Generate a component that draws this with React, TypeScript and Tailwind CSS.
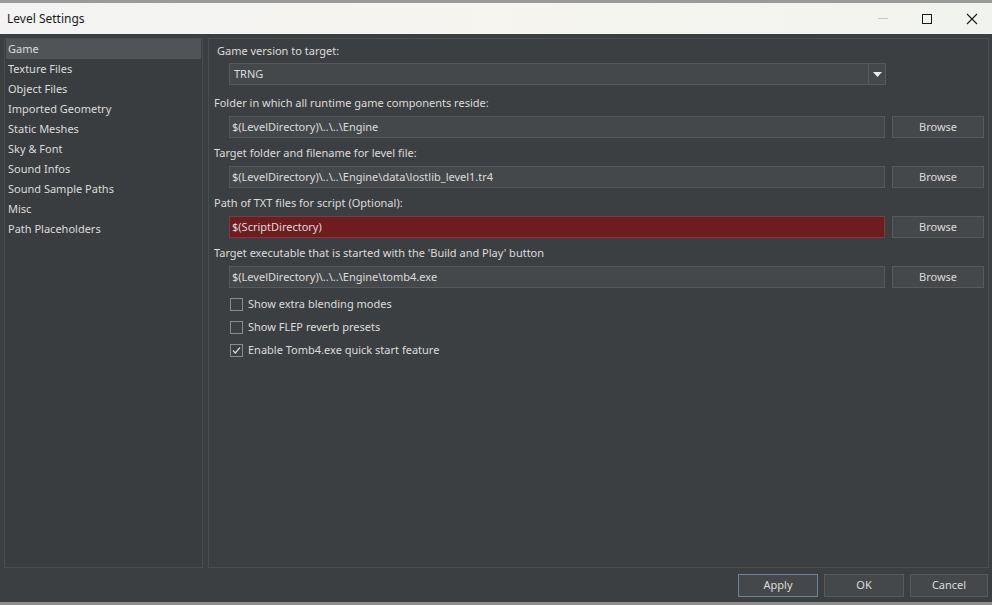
import React from 'react';

const font = { fontFamily: '"Noto Sans", "Open Sans", sans-serif' };

const categories = [
  'Game',
  'Texture Files',
  'Object Files',
  'Imported Geometry',
  'Static Meshes',
  'Sky & Font',
  'Sound Infos',
  'Sound Sample Paths',
  'Misc',
  'Path Placeholders',
];

function PathRow({ label, value, error }: { label: string; value: string; error?: boolean }) {
  return (
    <div className="flex flex-col">
      <div className="h-[16px] leading-[16px] pl-[4px] text-[#dcdcdc]">{label}</div>
      <div className="flex gap-[7px] pl-[19px] pt-[5px] pb-[7px]">
        <div
          className={`flex-1 h-[22px] leading-[19px] px-[2px] border ${
            error ? 'bg-[#6e1c1f] border-[#7e3a3c]' : 'bg-[#45484a] border-[#56595b]'
          } text-[#dcdcdc]`}
        >
          {value}
        </div>
        <button className="w-[92px] h-[22px] bg-[#45484a] border border-[#57595b] text-[#dcdcdc] leading-[20px]">
          Browse
        </button>
      </div>
    </div>
  );
}

function Check({ label, checked }: { label: string; checked?: boolean }) {
  return (
    <div className="flex items-center gap-[5px] h-[23px]">
      <div className="w-[13px] h-[13px] border border-[#8a8c8e] bg-[#3c3f41] flex items-center justify-center">
        {checked && (
          <svg width="11" height="11" viewBox="0 0 11 11">
            <path d="M2 5.5 L4.3 8 L9 2.5" stroke="#d8d8d8" strokeWidth="1.2" fill="none" />
          </svg>
        )}
      </div>
      <span className="text-[#dcdcdc]">{label}</span>
    </div>
  );
}

export default function App() {
  return (
    <div className="w-[992px] h-[605px] flex flex-col bg-[#3c3f41] text-[11px] overflow-hidden" style={font}>
      <div className="h-[3px] bg-[#9a9a9a]" />
      <div className="h-[31px] flex items-center bg-gradient-to-r from-[#f3f3f3] via-[#f6f5f0] to-[#f1f3ef] text-[#1a1a1a]">
        <span className="pl-[7px] text-[12px]">Level Settings</span>
        <div className="ml-auto flex items-center gap-[34px] pr-[14px]">
          <div className="w-[10px] h-px bg-[#c8c8c8]" />
          <div className="w-[10px] h-[10px] border border-[#1a1a1a]" />
          <svg width="12" height="12" viewBox="0 0 12 12">
            <path d="M1 1 L11 11 M11 1 L1 11" stroke="#1a1a1a" strokeWidth="1.1" />
          </svg>
        </div>
      </div>
      <div className="flex-1 flex gap-[5px] pt-[4px] pl-[4px] pr-[3px]">
        <div className="w-[199px] h-[530px] bg-[#3a3d3f] border border-[#4a4d50] px-[1px]">
          {categories.map((c, i) => (
            <div
              key={c}
              className={`h-[20px] leading-[19px] pl-[2px] text-[#dcdcdc] ${i === 0 ? 'bg-[#515456]' : ''}`}
            >
              {c}
            </div>
          ))}
        </div>
        <div className="flex-1 h-[530px] border border-[#4a4d50] pt-[4px] pr-[4px] pl-[1px]">
          <div className="h-[16px] leading-[16px] pl-[7px] text-[#dcdcdc]">Game version to target:</div>
          <div className="pl-[19px] pt-[4px] pb-[10px] pr-[98px]">
            <div className="h-[22px] flex bg-[#45484a] border border-[#57595b] text-[#dcdcdc]">
              <span className="flex-1 leading-[20px] pl-[4px]">TRNG</span>
              <div className="w-[17px] border-l border-[#57595b] flex items-center justify-center">
                <svg width="9" height="5" viewBox="0 0 9 5">
                  <path d="M0 0 L9 0 L4.5 5 Z" fill="#ececec" />
                </svg>
              </div>
            </div>
          </div>
          <PathRow label="Folder in which all runtime game components reside:" value="$(LevelDirectory)\..\..\Engine" />
          <PathRow
            label="Target folder and filename for level file:"
            value="$(LevelDirectory)\..\..\Engine\data\lostlib_level1.tr4"
          />
          <PathRow label="Path of TXT files for script (Optional):" value="$(ScriptDirectory)" error />
          <PathRow
            label="Target executable that is started with the 'Build and Play' button"
            value="$(LevelDirectory)\..\..\Engine\tomb4.exe"
          />
          <div className="pl-[20px] -mt-[2px] flex flex-col">
            <Check label="Show extra blending modes" />
            <Check label="Show FLEP reverb presets" />
            <Check label="Enable Tomb4.exe quick start feature" checked />
          </div>
        </div>
      </div>
      <div className="h-[34px] flex items-start justify-end gap-[6px] pr-[4px] pt-[6px]">
        <button className="w-[80px] h-[23px] bg-[#45484a] border border-[#6b8796] text-[#dcdcdc]">Apply</button>
        <button className="w-[80px] h-[23px] bg-[#45484a] border border-[#57595b] text-[#dcdcdc]">OK</button>
        <button className="w-[78px] h-[23px] bg-[#45484a] border border-[#57595b] text-[#dcdcdc]">Cancel</button>
      </div>
      <div className="h-[3px] bg-[#8e8e8e]" />
    </div>
  );
}
